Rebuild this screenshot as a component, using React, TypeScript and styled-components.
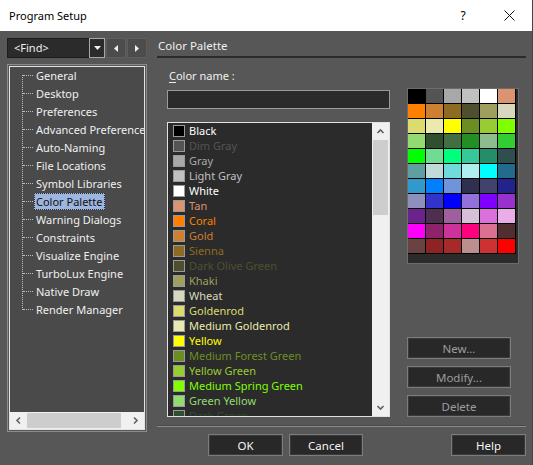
import React from "react";
import styled, { createGlobalStyle } from "styled-components";

const FONT = `"Noto Sans", "Open Sans", sans-serif`;

const GlobalStyle = createGlobalStyle`
  html, body {
    margin: 0;
    padding: 0;
    background: #575757;
    overflow: hidden;
  }
  * {
    box-sizing: border-box;
  }
`;

const Window = styled.div`
  width: 533px;
  height: 465px;
  display: flex;
  flex-direction: column;
  background: #575757;
  font-family: ${FONT};
  font-size: 11px;
  color: #f0f0f0;
  border-right: 1px solid #454545;
`;

const TitleBar = styled.div`
  height: 31px;
  flex: none;
  background: #ffffff;
  color: #000;
  display: flex;
  align-items: center;
`;

const Title = styled.div`
  flex: 1;
  padding-left: 9px;
  font-size: 11px;
`;

const TitleButton = styled.div`
  width: 46px;
  height: 31px;
  display: flex;
  align-items: center;
  justify-content: center;
  font-size: 12px;
`;

const Body = styled.div`
  flex: 1;
  display: flex;
  gap: 10px;
  padding: 7px 0 0 7px;
`;

const LeftColumn = styled.div`
  width: 140px;
  display: flex;
  flex-direction: column;
  gap: 6px;
`;

const FindRow = styled.div`
  height: 20px;
  display: flex;
  gap: 1px;
`;

const Combo = styled.div`
  width: 98px;
  display: flex;
  border: 1px solid #1c1c1c;
  background: #2b2b2b;
`;

const ComboText = styled.div`
  flex: 1;
  padding-left: 6px;
  line-height: 18px;
  color: #f0f0f0;
`;

const ComboButton = styled.div`
  width: 16px;
  margin: -1px -1px -1px 0;
  border: 1px solid #a8a8a8;
  background: #2b2b2b;
  display: flex;
  align-items: center;
  justify-content: center;
`;

const NavButton = styled.div`
  width: 20px;
  background: #4c4c4c;
  border: 1px solid #5e5e5e;
  display: flex;
  align-items: center;
  justify-content: center;
`;

const TreeFrame = styled.div`
  height: 368px;
  border: 1px solid #8c8c8c;
  padding: 1px;
`;

const TreeInner = styled.div`
  height: 100%;
  border: 1px solid #e4e4e4;
  background: #4a4a4a;
  display: flex;
  flex-direction: column;
  overflow: hidden;
`;

const TreeRows = styled.div`
  flex: 1;
  position: relative;
  overflow: hidden;
  padding-top: 0;
  margin-top: -1px;
  &::before {
    content: "";
    position: absolute;
    left: 12px;
    top: 9px;
    height: 235px;
    border-left: 1px dotted #bdbdbd;
  }
`;

const TreeRow = styled.div`
  height: 18px;
  display: flex;
  align-items: center;
  padding-left: 13px;
`;

const Connector = styled.span`
  width: 10px;
  flex: none;
  border-top: 1px dotted #bdbdbd;
`;

const TreeLabel = styled.span<{ $selected?: boolean }>`
  flex: none;
  margin-left: 1px;
  padding: 0 1px;
  height: 17px;
  line-height: 15px;
  white-space: nowrap;
  border: 1px dotted ${(p) => (p.$selected ? "#2a2a2a" : "transparent")};
  background: ${(p) => (p.$selected ? "#9cb6df" : "transparent")};
  color: ${(p) => (p.$selected ? "#111" : "#f0f0f0")};
`;

const HScroll = styled.div`
  height: 17px;
  flex: none;
  background: #f0f0f0;
  display: flex;
  align-items: center;
`;

const ScrollArrow = styled.div`
  width: 17px;
  height: 17px;
  display: flex;
  align-items: center;
  justify-content: center;
  flex: none;
`;

const HThumb = styled.div`
  width: 94px;
  height: 15px;
  background: #cdcdcd;
`;

const HTrack = styled.div`
  flex: 1;
`;

const RightColumn = styled.div`
  width: 369px;
  display: flex;
  flex-direction: column;
`;

const Heading = styled.div`
  height: 18px;
  line-height: 16px;
  padding-left: 1px;
  font-size: 11.5px;
`;

const HeadingRule = styled.div`
  height: 2px;
  background: #2b2b2b;
`;

const Content = styled.div`
  display: flex;
  padding-left: 10px;
  gap: 17px;
`;

const FormColumn = styled.div`
  width: 223px;
  display: flex;
  flex-direction: column;
`;

const Label = styled.div`
  margin-top: 10px;
  height: 16px;
  line-height: 16px;
  padding-left: 2px;
  u {
    text-decoration-thickness: 1px;
    text-underline-offset: 2px;
  }
`;

const TextInput = styled.div`
  margin-top: 6px;
  height: 19px;
  background: #2b2b2b;
  border: 1px solid #9b9b9b;
`;

const ListBox = styled.div`
  margin-top: 13px;
  height: 295px;
  border: 1px solid #e2e2e2;
  background: #2b2b2b;
  display: flex;
`;

const ListItems = styled.div`
  flex: 1;
  overflow: hidden;
`;

const ListItem = styled.div<{ $color: string }>`
  height: 15px;
  line-height: 15px;
  display: flex;
  align-items: center;
  padding-left: 5px;
  gap: 4px;
  color: ${(p) => p.$color};
  white-space: nowrap;
`;

const Swatch = styled.span<{ $color: string }>`
  width: 12px;
  height: 12px;
  flex: none;
  background: ${(p) => p.$color};
  border: 1px solid #9a9a9a;
`;

const VScroll = styled.div`
  width: 17px;
  background: #f0f0f0;
  display: flex;
  flex-direction: column;
  align-items: center;
`;

const VThumb = styled.div`
  width: 15px;
  height: 75px;
  background: #cdcdcd;
`;

const VTrack = styled.div`
  flex: 1;
`;

const SideColumn = styled.div`
  width: 112px;
  display: flex;
  flex-direction: column;
`;

const PaletteBox = styled.div`
  margin-top: 30px;
  width: 112px;
  height: 176px;
  border: 1px solid #6c6c6c;
  background: #2b2b2b;
`;

const PaletteGrid = styled.div`
  display: grid;
  grid-template-columns: repeat(6, 17px);
  grid-auto-rows: 14px;
  gap: 1px;
  padding: 0 1px 1px 0;
  width: 108px;
  background: #000;
`;

const Cell = styled.div<{ $color: string }>`
  background: ${(p) => p.$color};
`;

const SideButtons = styled.div`
  margin-top: 73px;
  display: flex;
  flex-direction: column;
  gap: 7px;
`;

const Button = styled.div<{ $disabled?: boolean; $width: number }>`
  width: ${(p) => p.$width}px;
  height: 22px;
  background: #282828;
  border: 1px solid #7c7c7c;
  box-shadow: inset 0 0 0 1px #3a3a3a;
  display: flex;
  align-items: center;
  justify-content: center;
  font-size: 11.5px;
  color: ${(p) => (p.$disabled ? "#9d9d9d" : "#f4f4f4")};
`;

const Separator = styled.div`
  margin-top: 8px;
  height: 2px;
  border-top: 1px solid #4a4a4a;
  border-bottom: 1px solid #8a8a8a;
`;

const ButtonRow = styled.div`
  margin-top: 7px;
  display: flex;
  gap: 6px;
  padding-left: 51px;
`;

const Spacer = styled.div`
  flex: 1;
`;

const Chevron = ({ dir }: { dir: "up" | "down" | "left" | "right" }) => {
  const rot = { up: 0, right: 90, down: 180, left: 270 }[dir];
  return (
    <svg width="9" height="9" viewBox="0 0 9 9">
      <path
        d="M1.5 6 L4.5 3 L7.5 6"
        fill="none"
        stroke="#606060"
        strokeWidth="1.6"
        transform={`rotate(${rot} 4.5 4.5)`}
      />
    </svg>
  );
};

const Triangle = ({ dir }: { dir: "down" | "left" | "right" }) => {
  const points =
    dir === "down" ? "0,0 7,0 3.5,4" : dir === "left" ? "4,0 4,7 0,3.5" : "0,0 0,7 4,3.5";
  const w = dir === "down" ? 7 : 4;
  const h = dir === "down" ? 4 : 7;
  return (
    <svg width={w} height={h} viewBox={`0 0 ${w} ${h}`}>
      <polygon points={points} fill="#f0f0f0" />
    </svg>
  );
};

const treeItems = [
  "General",
  "Desktop",
  "Preferences",
  "Advanced Preferences",
  "Auto-Naming",
  "File Locations",
  "Symbol Libraries",
  "Color Palette",
  "Warning Dialogs",
  "Constraints",
  "Visualize Engine",
  "TurboLux Engine",
  "Native Draw",
  "Render Manager",
];

const namedColors: [string, string][] = [
  ["Black", "#000000"],
  ["Dim Gray", "#545454"],
  ["Gray", "#a8a8a8"],
  ["Light Gray", "#c0c0c0"],
  ["White", "#ffffff"],
  ["Tan", "#db9370"],
  ["Coral", "#ff7f00"],
  ["Gold", "#cd7f32"],
  ["Sienna", "#8e6b23"],
  ["Dark Olive Green", "#4f4f2f"],
  ["Khaki", "#9f9f5f"],
  ["Wheat", "#d8d8bf"],
  ["Goldenrod", "#dbdb70"],
  ["Medium Goldenrod", "#eaeaae"],
  ["Yellow", "#ffff00"],
  ["Medium Forest Green", "#6b8e23"],
  ["Yellow Green", "#99cc32"],
  ["Medium Spring Green", "#7fff00"],
  ["Green Yellow", "#93db70"],
  ["Dark Green", "#2f4f2f"],
];

const palette = [
  "#000000", "#545454", "#a8a8a8", "#c0c0c0", "#ffffff", "#db9370",
  "#ff7f00", "#cd7f32", "#8e6b23", "#4f4f2f", "#9f9f5f", "#d8d8bf",
  "#dbdb70", "#eaeaae", "#ffff00", "#6b8e23", "#99cc32", "#7fff00",
  "#93db70", "#2f4f2f", "#426f42", "#238e23", "#8fbc8f", "#32cd32",
  "#00ff00", "#70db93", "#00ff7f", "#37c89a", "#238e68", "#2f4f4f",
  "#5f9f9f", "#c0d9d9", "#70dbdb", "#afeeee", "#00ffff", "#236b8e",
  "#3299cc", "#007fff", "#7093db", "#2f2f4f", "#42426f", "#23238e",
  "#8f8fbd", "#3232cd", "#0000ff", "#9370db", "#7f00ff", "#9932cd",
  "#6b238e", "#4e2f4f", "#9f5f9f", "#d8bfd8", "#db70db", "#eaadea",
  "#ff00ff", "#8e236b", "#cc3299", "#ff007f", "#db7093", "#4f2f2f",
  "#6b4242", "#8e2323", "#a62a2a", "#bc8f8f", "#cd3232", "#ff0000",
];

const textColor = (name: string, color: string) =>
  name === "Black" ? "#ffffff" : color;

const App = () => {
  return (
    <Window>
      <GlobalStyle />
      <TitleBar>
        <Title>Program Setup</Title>
        <TitleButton>?</TitleButton>
        <TitleButton>
          <svg width="11" height="11" viewBox="0 0 11 11">
            <path d="M0.5 0.5 L10.5 10.5 M10.5 0.5 L0.5 10.5" stroke="#111" strokeWidth="1" />
          </svg>
        </TitleButton>
      </TitleBar>
      <Body>
        <LeftColumn>
          <FindRow>
            <Combo>
              <ComboText>&lt;Find&gt;</ComboText>
              <ComboButton>
                <Triangle dir="down" />
              </ComboButton>
            </Combo>
            <NavButton>
              <Triangle dir="left" />
            </NavButton>
            <NavButton>
              <Triangle dir="right" />
            </NavButton>
          </FindRow>
          <TreeFrame>
            <TreeInner>
              <TreeRows>
                {treeItems.map((item) => (
                  <TreeRow key={item}>
                    <Connector />
                    <TreeLabel $selected={item === "Color Palette"}>{item}</TreeLabel>
                  </TreeRow>
                ))}
              </TreeRows>
              <HScroll>
                <ScrollArrow>
                  <Chevron dir="left" />
                </ScrollArrow>
                <HThumb />
                <HTrack />
                <ScrollArrow>
                  <Chevron dir="right" />
                </ScrollArrow>
              </HScroll>
            </TreeInner>
          </TreeFrame>
        </LeftColumn>
        <RightColumn>
          <Heading>Color Palette</Heading>
          <HeadingRule />
          <Content>
            <FormColumn>
              <Label>
                <u>C</u>olor name :
              </Label>
              <TextInput />
              <ListBox>
                <ListItems>
                  {namedColors.map(([name, color]) => (
                    <ListItem key={name} $color={textColor(name, color)}>
                      <Swatch $color={color} />
                      {name}
                    </ListItem>
                  ))}
                </ListItems>
                <VScroll>
                  <ScrollArrow>
                    <Chevron dir="up" />
                  </ScrollArrow>
                  <VThumb />
                  <VTrack />
                  <ScrollArrow>
                    <Chevron dir="down" />
                  </ScrollArrow>
                </VScroll>
              </ListBox>
            </FormColumn>
            <SideColumn>
              <PaletteBox>
                <PaletteGrid>
                  {palette.map((c, i) => (
                    <Cell key={i} $color={c} />
                  ))}
                </PaletteGrid>
              </PaletteBox>
              <SideButtons>
                <Button $disabled $width={104}>New...</Button>
                <Button $disabled $width={104}>Modify...</Button>
                <Button $disabled $width={104}>Delete</Button>
              </SideButtons>
            </SideColumn>
          </Content>
          <Separator />
          <ButtonRow>
            <Button $width={75}>OK</Button>
            <Button $width={74}>Cancel</Button>
            <Spacer />
            <Button $width={75}>Help</Button>
          </ButtonRow>
        </RightColumn>
      </Body>
    </Window>
  );
};

export default App;
